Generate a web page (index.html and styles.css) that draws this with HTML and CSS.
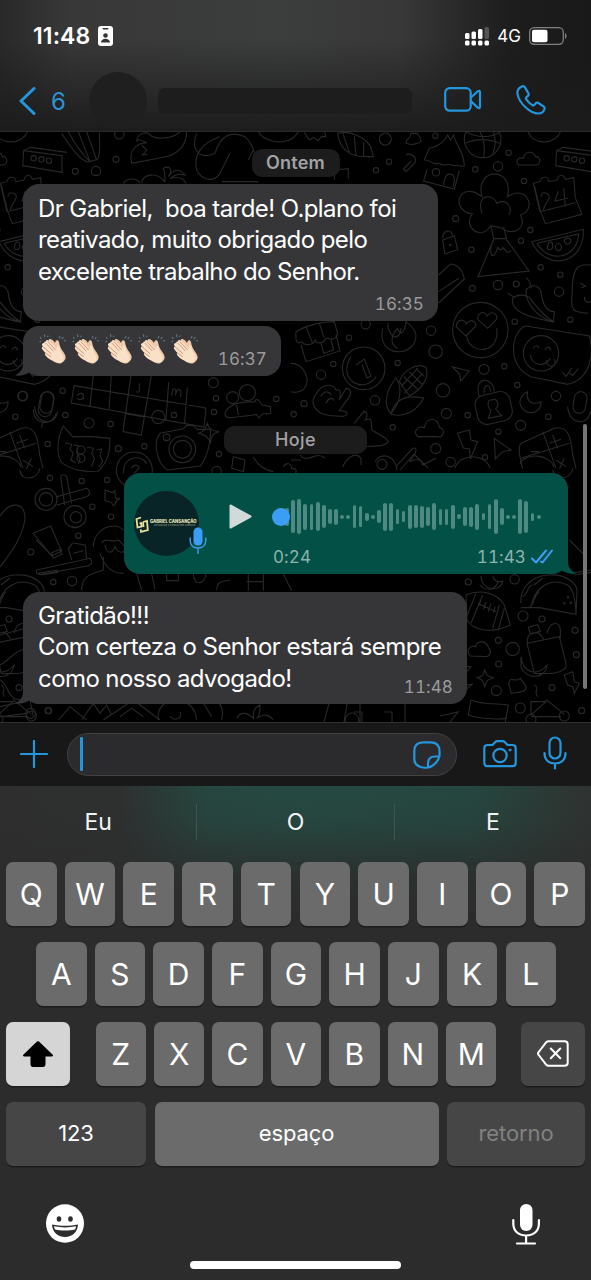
FILE: index.html
```html
<!DOCTYPE html>
<html lang="pt-BR">
<head>
<meta charset="utf-8">
<meta name="viewport" content="width=device-width">
<title>Conversa</title>
<link rel="stylesheet" href="styles.css">
</head>
<body>
<svg class="defs" width="0" height="0" aria-hidden="true">
  <symbol id="clap" viewBox="0 0 28 30">
    <g stroke="#5c6f7c" stroke-width="1.3" stroke-linecap="round" fill="none"><path d="M1.500 3.500l.5.8M5.500 1l.3 1.500M1 7.500l.6 0M20 4l1-1.500M24 3.500l-1 1M26.500 6.500l-1 .3M9 2l-.3.500"/></g>
    <path d="M10 5.500C12 4 14.500 7 16 9c.500-2 1.500-3.500 3-2.500 1.500 1 1 4 2.500 7 2 4 6 7.500 5 11-.5 2-3 4.500-5 5-3 .500-6-2-8-5C8 19 6 15 7 12z" fill="#efc9aa"/>
    <path d="M3.500 9.500c-1 1-.5 2 .5 3.200-1.500.2-1.500 1.600-.5 2.800 1 1.500 2.200 2.600 3 3.500-1 .500-.8 1.500 0 2.500 2 3 6 4.500 9 6.500 2.500 1.500 7 1 9-2 1.500-2.500-1.500-6-3-9-1-2.500-.5-4.500-2-5.500-1.500-.5-2 1.500-1.500 3.500-3-3-6-7-9-8.800-1.200-.7-2.300.2-2 1.400-1-.6-2.500.4-1.500 1.700-1-.6-1.600-.3-2 .200z" fill="#fbe0c8"/>
    <path d="M7 9.300l7 7.400M9 7.800l7.500 8M4 12.700l8 7M6.500 19l5 3.500" stroke="#c99270" stroke-width=".9" fill="none" stroke-linecap="round"/>
  </symbol>
  <symbol id="mic" viewBox="0 0 24 34">
    <rect x="6.500" y="1.500" width="11" height="21" rx="5.500"/><path d="M1.500 17c0 6.500 4 10.500 10.500 10.500S22.500 23.500 22.500 17M12 27.500v5"/>
  </symbol>
</svg>

<header class="header">
  <div class="status">
    <div class="clock"><span>11:48</span>
      <svg width="15" height="20" viewBox="0 0 15 20"><rect width="15" height="20" rx="3" fill="#fff"/><rect x="4.500" y="2" width="6" height="1.500" rx=".7" fill="#353535"/><circle cx="7.500" cy="9.500" r="2.300" fill="#353535"/><path d="M3 16.500c.3-5 8.700-5 9 0z" fill="#353535"/></svg>
    </div>
    <div class="signal">
      <svg width="24" height="19" viewBox="0 0 24 19" fill="#fff"><rect x="0" y="6" width="4.500" height="6" rx="1.500"/><rect x="6.500" y="4.500" width="4.500" height="7.500" rx="1.500"/><rect x="13" y="2" width="4.500" height="10" rx="1.500"/><rect x="19.500" y="0" width="4.500" height="12" rx="1.500" fill="#555"/><rect y="13.500" width="4.500" height="5" rx="1.500"/><rect x="6.500" y="13.500" width="4.500" height="5" rx="1.500"/><rect x="13" y="13.500" width="4.500" height="5" rx="1.500"/><rect x="19.500" y="13.500" width="4.500" height="5" rx="1.500"/></svg>
      <span>4G</span>
      <svg width="38" height="18" viewBox="0 0 38 18"><rect x=".7" y=".7" width="33.600" height="16.600" rx="4.500" fill="none" stroke="#818181" stroke-width="1.300"/><rect x="3" y="2.800" width="15.500" height="12.400" rx="2" fill="#fff"/><path d="M36 6c2 1 2 5 0 6z" fill="#818181"/></svg>
    </div>
  </div>
  <div class="nav">
    <svg width="17" height="28" viewBox="0 0 17 28" class="stroke back"><path d="M15 1.500L2 14l13 12.500"/></svg>
    <span class="unread">6</span>
    <span class="avatar"></span>
    <span class="contact"></span>
    <svg width="38" height="25" viewBox="0 0 38 25" class="stroke video"><rect x="1.200" y="1.200" width="25.500" height="22.500" rx="4.500"/><path d="M27 10.500l6.500-6c1.500-1.200 2.500-.8 2.500.700v14.500c0 1.500-1 2-2.500.7l-6.500-6"/></svg>
    <svg width="30" height="30" viewBox="0 0 30 30" class="stroke phone"><path d="M6 1.400C3.500 2.500 1 5 1.400 8.500c.6 4.500 4 10 8.400 14 4 3.800 9.200 6 12.700 6 3 0 5.200-2 6-4.500.4-1.200 0-2-1-2.700l-5-3.300c-1-.7-2-.5-2.700.3l-1.300 1.500c-.7.800-1.400.8-2.200.3-2.500-1.600-4.600-3.700-6-5.800-.6-.9-.5-1.600.2-2.200l1.500-1.300c.8-.7.900-1.700.3-2.700L9 2.400c-.7-1-1.700-1.500-3-1z"/></svg>
  </div>
</header>

<main class="chat">
  <svg class="wallpaper" viewBox="0 132 591 590" width="591" height="590" aria-hidden="true">
    <g id="doodles">
      <g transform="translate(291 130) scale(.33333)">
        <path d="M140 10c5 45 35 72 85 70h22l-8-30C220 20 175 0 140 10zM155 8l20 60M190 18l5 60M218 35v45M40 8l15 22 12-8 14 10 10-12h14l-6-20M345 40c0-20 15-10 15-30h20c0 12 12 8 10 25-15 10-35 10-45 5M345 75c12-8 40 10 25 25l-25 25-8-8 24-24M130 150v-30l42-4v30"/>
        <path d="M400 90l15-35c25-5 45-20 55-40l8 15 10-15c5 30 30 45 32 92-12 6-18-5-27 0-10 3-18-8-28-3s-18-8-28-3-16-12-37-11M408 118l-10 35 92 24 15-54M458 165c2-25 10-35 22-32s12 15 6 38"/>
        <circle cx="435" cy="127" r="11"/><circle cx="575" cy="28" r="55"/><path d="M525 5c30 20 80 20 102 0M523 40c30-15 70-15 104 0M548-20c30 30 35 70 30 102M595-20c15 20 25 60 10 92M710 0c10 50 90 45 100 0"/>
        <path d="M683 105c-12-12 0-25 14-20 4-22 30-25 36-5 18-2 18 25 0 25zM797 62l115 15v50l-118-20zM797 62l20-10 110 15"/><circle cx="827" cy="85" r="8"/><circle cx="850" cy="88" r="8"/><circle cx="873" cy="92" r="8"/>
        <path d="M573 200c-25-90 100-90 76 0 60-40 90 40 40 55 20 50-35 60-55 40l-35-8c-30 50-85 0-55-35-70-10-40-105 29-52zM573 250c-20-60 35-60 45-30 30-20 50 20 35 35M600 288l8 38h38l-8-35M608 328l-47 112 153-17-68-95M605 332c-15 50 5 60 15 20 10 15 20 0 15 0 15 15 15 20 25 10"/>
        <path d="M727 160l20-5c5-20 25-15 27 0l24-5c5-20 22-15 25-2l25-5 5 60 20 50-110 28-15-40-17-70zM727 160l20 85 106-27M750 200c0-20 25-10 25 0s-20 30-17 42l25-5M802 183l-10 30 38-8M818 175l5 55M722 335l155-37c5 105-110 130-155 37zM738 340l125-28c-5 75-90 90-125 28M770 350c0-15 15-20 15-5 5 15-20 20-15 5M795 345c10-15 25 10 10 17-10 0-15-10-10-17M820 330c10-10 20-5 20 5-10 15-20 5-20-5"/>
        <path d="M665 505c-8 40 45 55 125 72-35-20-55-50-75-75-20-10-35-10-50 3zM705 480c-2 45 40 85 85 97M705 480c20-20 35-15 45 5 5 45 20 60 40 60l-3 32M720 475c0-15-5-25-15-32M650 490l20 12"/>
        <circle cx="568" cy="600" r="83"/><path d="M495 590c5-30 30-20 30-8 15-20 35-5 28 8l-28 28zM560 568c0-25 22-25 28-10 15-20 35-5 27 12l-25 25zM527 620c10 55 100 55 90-25M455 325c0-25 25-30 30-8M455 330l35-13 10 42-38 13zM443 435l35-33c20 0 35 15 42 45l-77 72M443 485l60-40"/><circle cx="478" cy="345" r="2"/>
        <path d="M15 605c35-20 80-30 115-30l10 35c-10 30-30 10-35 15-10 20-30 15-32 5-10 20-35 15-40 5-15 10-20 0-18-30M30 645l15 50 102-32-12-50M90 640l8 30 30-10-8-30M45 590l20 50M85 580l15 45M275 595c-20 90 100 90 100 20-5-25-20-30-30-40-5 40-20 40-25 20-20 20-25 50 0 60M290 580c0 40 35 60 40 15"/>
        <circle cx="218" cy="715" r="64"/><path d="M180 680c-45 70 40 115 75 60M195 705l25-18 20 52-12 5-15-40"/><path d="M325 755c10-30 50-60 80-43 12 30-15 70-50 85zM338 740l45 40M355 725l40 40M375 715l25 25M340 790l55-60M330 770l50-55M300 852c-25-30-15-70 15-108 20 30 15 70-15 108 10-40 40-60 98-48-20 40-60 60-98 48"/>
        <path d="M90 850c-30-20-30-40-10-65 20-30 50-20 55-5 15-5 15 10 10 30l20-35c15 0 15 10 12 22l-32 45c30 0 30 15 10 17-20 0-45 0-65-9zM90 800c5-15 25-20 30-5M105 820c5-15 20-20 25-8M0 700c40 0 60 50 40 75-10 10-20 15-40 10M190 880l28-35c15 0 10 15 5 25 25-10 15 5 20 30 30 20 50 25 48 38-15 15-60 10-78 12-15-20-15-40-23-50M155 1010c20-40 45-40 55-25v20M315 1010l50-55c15-5 10 10 5 20l-15 20c30-15 40 0 40 10l40-20"/>
        <path d="M484 710l50 13-25 30-3-20zM380 920c-15-15 0-35 20-27 5-35 45-30 45 0 25 5 5 35-3 27zM500 910l35-10 5 30 20 5-22 52-3-30-18-3zM610 925l50 35-25 5-22 22z"/>
        <rect x="555" y="790" width="106" height="88" rx="28" transform="rotate(-13 608 834)"/><path d="M565 800c-20-60 40-65 45-15M580 790c-5-30 20-30 18-5M605 810c-20-5-15 25-5 30l-8 25 40-8-18-20c15-15 0-35-9-27zM710 785c-20 10-30 30-18 48 25 30 60 10 58-18-35 15-45-10-40-30z"/>
        <path d="M705 588l190 30c15 50 5 130-65 145l-110-23c-75-30-60-140-15-152z"/><circle cx="750" cy="670" r="53"/><path d="M727 655c5-12 15-10 17 0M762 660c5-12 15-10 17 2M718 675c5 30 40 40 60 10M765 690c5 30 35 20 25-2M815 727l10 12 18-25M835 730l10 6 17-20M900 405c-40-5-50 10-55 50l-3 60c0 35 20 30 50 35M868 460l15 8-12 6M880 500c0 20 20 20 20 12"/>
        <rect x="848" y="785" width="38" height="65" rx="19" transform="rotate(10 867 817)"/><path d="M830 830c5 60 65 55 68 15M690 940l100-45c40-10 50 25 55 80l10 40M690 940c-10 10-5 40 5 75M720 965h25M755 905l40 110M690 985l145-45M775 940l35-12M785 915l15 40M795 990l30 20M820 985l-15 32M0 990l30 0"/>
        <g class="dots"><circle cx="283" cy="27" r="18"/><circle cx="433" cy="17" r="8"/><circle cx="294" cy="95" r="8"/><circle cx="255" cy="121" r="8"/><circle cx="553" cy="118" r="8"/><circle cx="621" cy="109" r="14"/><circle cx="653" cy="68" r="8"/><circle cx="699" cy="153" r="8"/><circle cx="494" cy="266" r="9"/><circle cx="541" cy="359" r="8"/><circle cx="690" cy="332" r="8"/><circle cx="718" cy="300" r="8"/><circle cx="749" cy="412" r="8"/><circle cx="808" cy="434" r="8"/><circle cx="804" cy="485" r="14"/><circle cx="544" cy="475" r="9"/><circle cx="621" cy="465" r="14"/><circle cx="676" cy="462" r="9"/><circle cx="671" cy="575" r="8"/><circle cx="838" cy="569" r="8"/><circle cx="420" cy="602" r="14"/><circle cx="434" cy="665" r="20"/><circle cx="224" cy="583" r="14"/><circle cx="174" cy="623" r="8"/><circle cx="127" cy="702" r="8"/><circle cx="90" cy="734" r="14"/><circle cx="320" cy="699" r="8"/><circle cx="579" cy="718" r="15"/><circle cx="640" cy="709" r="8"/><circle cx="679" cy="765" r="8"/><circle cx="795" cy="798" r="14"/><circle cx="456" cy="781" r="20"/><circle cx="252" cy="811" r="14"/><circle cx="39" cy="821" r="9"/><circle cx="466" cy="850" r="15"/><circle cx="530" cy="856" r="8"/><circle cx="689" cy="886" r="15"/><circle cx="772" cy="860" r="8"/><circle cx="305" cy="892" r="8"/><circle cx="622" cy="905" r="8"/><circle cx="434" cy="956" r="15"/><circle cx="479" cy="996" r="14"/><circle cx="582" cy="982" r="8"/><circle cx="273" cy="1003" r="15"/></g>
      </g>
      <g transform="translate(0 130) scale(.33333)">
        <path d="M185 10c20 30 50 80 80 86l28-8c10-20 5-60 5-80M205 5c15 30 40 65 65 90M235 5l35 90M260 5l30 85M410 35c0-20 20-30 35-25 15 20 70 20 95-5l20-3c0 40-20 70-70 80l-95 18c-10-40 15-60 45-62-15-5-25-15-30-3M425 45l15 15-12 15 15-3M590 10c-20 50 10 80 55 60 15-50 45-70 90-50 30 30 35 60 25 100M660 20c-60 20-80 60-70 100 15 30 50 40 70 10l30-60M665 155h110M745 90l15-30M370 160c15-20 45-15 50 0M425 160c0-30 50-35 70-3M495 155c0-20 0-30-5-40 20-10 30 5 15 25 20-30 40-20 50-5-20-5-30 0-45 10 20-5 40-5 48 15M775 0c0 30 90 60 120 5"/>
        <circle cx="226" cy="124" r="9"/><circle cx="288" cy="123" r="14"/><circle cx="348" cy="88" r="9"/><circle cx="358" cy="13" r="14"/>
      </g>
      <g transform="translate(0 370) scale(.33333)">
        <path d="M222 55l396 67-8 0M222 55l-8 52 398 72 6-57M280 20l-10 97M335 10l-8 117M395 10l-26 183 55 10 32-190M506 45l-8 113M562 60l-8 108M380 140l50 8M232 85c5-10 18-8 18 0v12M232 92c5 8 15 5 18-2M418 48v20c0 8-5 8-10 4M515 85l3-18c5-5 10-3 10 5l-2 12 5-15c5-5 12-3 12 5l-2 15" transform="translate(0 -8)"/>
        <rect x="118" y="65" width="40" height="75" rx="20" transform="rotate(10 138 102)"/><path d="M100 118c0 50 60 50 68 12M128 158l-3 15M190 168l28 32h60l52 5c0 40-5 70-35 98-40 5-85-5-110-25-20-30-10-80 5-110zM195 218l20 5-5 15 10 12-8 20 15 8M220 225l15 2-5 20 10 20-5 15M260 230l20 5-5 15 8 15-8 25M290 240l15-3-5 20 8 15-10 20"/><circle cx="243" cy="240" r="12"/><circle cx="243" cy="265" r="12"/>
        <path d="M480 190l70-14 10-10h20l12 12 40 0c0 50-10 80-30 110l-100 12c-30-20-45-80-22-110z"/><circle cx="547" cy="238" r="40"/><circle cx="547" cy="238" r="27"/><circle cx="500" cy="202" r="10"/><path d="M595 190c20-5 22-15 27-30 5 20 15 22 35 25-20 5-25 15-25 35-8-20-15-25-37-30zM675 130c10-35 70-35 90-35 5-15 15 0 22 10l25 5v20l-25 2-10 12-8-10c-60 5-95 20-94-4M710 105l5 30"/><circle cx="698" cy="83" r="18"/><circle cx="742" cy="68" r="24"/><circle cx="403" cy="300" r="54"/><path d="M370 310c0-50 50-60 70-30M395 295c5-15 25-10 22 0l-15 15M700 260l35 10-5 35-35-10zM850 290c10-15 25-10 25 5 20 0 15 15 5 20M760 260c10 20 30 40 60 45M315 360c20 5 25 15 30 0 0 20 0 30 15 25-20 10-10 20-20 22-10-20-20-10-25-15z"/>
        <circle cx="138" cy="388" r="33"/><circle cx="138" cy="388" r="20"/><circle cx="225" cy="440" r="33"/><circle cx="228" cy="442" r="17"/><path d="M170 380l90-25c10 5 12 20 0 25l-90 25M182 320c5-10 15-5 18 0l15 80M182 320l12 85M100 490l52-22 33 75-30 15zM155 548l25-10 5 15-25 12zM110 600l160-35c8 10 5 20-5 22l-145 27c-10 0-12-10-10-14M215 570l-10-35c15-10 5-20 20-15l30 5c5 10 0 15 5 40M220 550l30-8M280 530c0-50 60-80 90-50M300 550c10 30 30 60 70 60M305 520c10-20 30 0 50-10l20 20M315 525c5 30 25 25 30 5 8 20 25 20 30 10M310 560v40M245 660c0-50 40-50 65-60M410 610l15 50M455 612l10 45M500 612v20h35v-20M580 610c0 40 35 35 38 0M650 660c0-30 25-25 40-30M745 612v50M790 612v50M740 635h50M850 612l25 50"/>
        <path d="M175 1050l35-40 50 40M245 1050l35-50 20 30 20-25 15 30M310 1050l90-60 80 60M360 1040l35-25 35 25M475 1050c-10-80 110-80 115 0M510 1040c15 15 40 5 30-15M610 1000l25 40M650 990c20 20 20 40 15 60M710 1045c10-20 30-20 50 0 0-20 0-30 20-40 0 20 0 30-10 40 20-15 40-10 50 5M0 1010l90-20 10 50M5 1040l75-10"/>
        <g class="dots"><circle cx="67" cy="78" r="14"/><circle cx="188" cy="62" r="8"/><circle cx="196" cy="135" r="8"/><circle cx="267" cy="159" r="15"/><circle cx="332" cy="162" r="8"/><circle cx="475" cy="141" r="20"/><circle cx="522" cy="135" r="8"/><circle cx="640" cy="38" r="15"/><circle cx="648" cy="85" r="8"/><circle cx="642" cy="126" r="8"/><circle cx="829" cy="87" r="8"/><circle cx="881" cy="133" r="8"/><circle cx="143" cy="222" r="8"/><circle cx="355" cy="236" r="9"/><circle cx="433" cy="229" r="8"/><circle cx="657" cy="252" r="8"/><circle cx="650" cy="303" r="14"/><circle cx="150" cy="324" r="8"/><circle cx="245" cy="333" r="8"/><circle cx="321" cy="330" r="8"/><circle cx="277" cy="410" r="8"/><circle cx="333" cy="440" r="8"/><circle cx="235" cy="497" r="8"/><circle cx="92" cy="546" r="9"/><circle cx="160" cy="636" r="8"/><circle cx="216" cy="633" r="14"/><circle cx="144" cy="1022" r="9"/><circle cx="92" cy="1030" r="15"/></g>
      </g>
      <g transform="translate(441 540) scale(.33333)">
        <path d="M75 165c45-20 95-5 115 30l18 60c-50 25-110 20-130-15zM105 160l-28 70M125 165l-35 85M175 195l-20 70M190 205l-18 65M110 190l55 25M120 180l-8 20M135 186l-8 22M150 190l-8 25M163 200l-6 18M120 108c0 45 60 50 65 15-15 5-25 0-30-15M240 190c-5-40 25-80 80-85 60-5 90 30 88 50l-3 68-110-20-55 0M270 200c10-60 60-90 110-65 20 15 25 60 25 88M245 170c20-10 10-30 30-35M265 200c20-10 10-30 30-45"/>
        <circle cx="381" cy="172" r="2"/><circle cx="370" cy="190" r="2"/><circle cx="390" cy="188" r="2"/>
        <path d="M88 348c-15-15 0-35 15-28 5-20 35-20 40 5 10 5 5 25-10 25zM258 310l97-20 20 80c5 20-20 35-95 30zM260 310c-5-30 15-35 35-30l15 20M262 262l28-8 8 20-30 8zM318 280c10-40 40-35 40-10v25M240 350c5 50 50 60 78 25-5 45-65 45-78 5zM108 413c20-5 20-12 23-25 5 20 10 22 27 25-20 5-22 10-27 27-5-20-8-22-23-27zM203 430c5-25 20 0 35-15l18 25c0 15-15 15-45 20zM280 435c20 10-5 20 10 35M370 405l25-10 5 30 15 5-15 30-5-20-15-5zM90 480c30 15 90 10 112 15l-10 55M90 480l-8 45c30 10 80 15 115 10M270 485h45l-45 40zM315 478l55 45M270 530h90M385 0l50 50M390 100l60-10M400 105l50-8M60 380h30l-20 25M50 440l45-8-25 20"/>
        <g class="dots"><circle cx="82" cy="126" r="9"/><circle cx="221" cy="118" r="14"/><circle cx="246" cy="228" r="15"/><circle cx="303" cy="237" r="9"/><circle cx="402" cy="271" r="9"/><circle cx="172" cy="301" r="9"/><circle cx="215" cy="327" r="20"/><circle cx="173" cy="372" r="9"/><circle cx="406" cy="344" r="9"/><circle cx="166" cy="452" r="15"/><circle cx="333" cy="443" r="9"/><circle cx="238" cy="504" r="15"/><circle cx="422" cy="512" r="9"/><circle cx="270" cy="538" r="15"/><circle cx="370" cy="528" r="15"/></g>
      </g>
      <path d="M345 722c0-12 14-12 14 0M330 700l-6 22M347 704l-3 18M405 704v18M360 704v18M354 712h8v10M384 712h8v10M440 716l18-4-8 10M300 455c8 10 15-5 25 3M375 462c5-10 20-8 22 8M400 470l14-16 14 14M455 468c5-15 30-15 35 0M480 585c5 6 15 6 18-3M520 464c5-12 30-10 34 3M534 585l9-7M553 470c0 12 18 10 20-2"/>
    </g>
    <use href="#doodles" x="-533"/>
    <path d="M0 516c10-15 25-15 25 3-3 20-15 35-25 48M0 635l23-6M0 665c10-5 15-15 23-15M0 680c10 5 5 20 23 20"/>
  </svg>

  <span class="day day-first">Ontem</span>

  <article class="bubble in first">
    <p>Dr Gabriel,&nbsp; boa tarde! O.plano foi<br>reativado, muito obrigado pelo<br>excelente trabalho do Senhor.</p>
    <time>16:35</time>
  </article>

  <article class="bubble in claps">
    <svg class="tail" width="22" height="16" viewBox="0 0 22 16"><path d="M8 0v4c0 5-3 9-8 11.500 5 1 11-1 15-3.500l7 4V0z"/></svg>
    <span class="emoji" role="img" aria-label="Aplausos"><svg><use href="#clap"/></svg><svg><use href="#clap"/></svg><svg><use href="#clap"/></svg><svg><use href="#clap"/></svg><svg><use href="#clap"/></svg></span>
    <time>16:37</time>
  </article>

  <span class="day day-today">Hoje</span>

  <article class="bubble out">
    <svg class="tail" width="22" height="16" viewBox="0 0 22 16"><path d="M14 0v4c0 5 3 9 8 11.500-5 1-11-1-15-3.500l-7 4V0z"/></svg>
    <div class="sender">
      <svg class="brand" width="14" height="17" viewBox="0 0 14 17"><path d="M6 1.500L1.500 3l1 8.500 4-1L6 7 4.500 7.500M8 6l4-1 .8 9L6 15.800l-.3-2.500M8 6l.5 5"/></svg>
      <div class="brand-text"><b>GABRIEL CANSANÇÃO</b><small>ADVOGADO E CONSULTOR JURÍDICO</small></div>
      <svg class="voice" width="18" height="27" viewBox="0 0 18 27"><rect x="4.500" y=".5" width="9" height="18" rx="4.500" fill="#3c9df5"/><path d="M1.200 11v2.500c0 4.500 3 7.500 7.800 7.500s7.800-3 7.800-7.500V11M9 21v5.500" fill="none" stroke="#3c9df5" stroke-width="1.400" stroke-linecap="round"/></svg>
    </div>
    <svg class="play" width="23" height="25" viewBox="0 0 23 25"><path d="M1.500 1.500v22L21.500 12.500z"/></svg>
    <div class="player">
      <div class="wave">
        <i style="height:18px"></i><i style="height:33px"></i><i style="height:35px"></i><i style="height:26px"></i><i style="height:26px"></i><i style="height:29px"></i><i style="height:23px"></i><i style="height:15px"></i><i style="height:16px"></i><i style="height:4px"></i><i style="height:4px"></i><i style="height:23px"></i><i style="height:21px"></i><i style="height:8px"></i><i style="height:4px"></i><i style="height:13px"></i><i style="height:28px"></i><i style="height:28px"></i><i style="height:15px"></i><i style="height:11px"></i><i style="height:24px"></i><i style="height:23px"></i><i style="height:22px"></i><i style="height:19px"></i><i style="height:27px"></i><i style="height:16px"></i><i style="height:16px"></i><i style="height:24px"></i><i style="height:5px"></i><i style="height:19px"></i><i style="height:20px"></i><i style="height:26px"></i><i style="height:7px"></i><i style="height:25px"></i><i style="height:35px"></i><i style="height:17px"></i><i style="height:4px"></i><i style="height:4px"></i><i style="height:35px"></i><i style="height:32px"></i><i style="height:8px"></i><i style="height:4px"></i>
        <span class="knob"></span>
      </div>
      <div class="meta"><span>0:24</span><span class="sent">11:43 <svg width="22" height="15" viewBox="0 0 22 15"><path d="M1 9.500l4 4L15 1.500M10 12.500l1.500 1L21 1.500"/></svg></span></div>
    </div>
  </article>

  <article class="bubble in thanks">
    <svg class="tail" width="22" height="16" viewBox="0 0 22 16"><path d="M8 0v4c0 5-3 9-8 11.500 5 1 11-1 15-3.500l7 4V0z"/></svg>
    <p>Gratidão!!!<br>Com certeza o Senhor estará sempre<br>como nosso advogado!</p>
    <time>11:48</time>
  </article>
  <span class="scrollbar"></span>
</main>

<section class="composer">
  <svg width="28" height="28" viewBox="0 0 28 28" class="stroke plus"><path d="M14 1v26M1 14h26"/></svg>
  <div class="field"><span class="caret"></span>
    <svg width="28" height="28" viewBox="0 0 28 28" class="stroke"><path d="M15 26.500c-2 .4-5 .2-7.500-.5C3.500 24.700 1.300 22 1.300 18V10c0-5.500 3-8.700 8.700-8.700h7.500c5.500 0 9 3 9 8.700v5c-.5 4.500-6.500 11-11.500 11.500zM15 26.500v-4c0-4.500 2.500-7 7-7h4.500"/></svg>
  </div>
  <svg width="34" height="28" viewBox="0 0 34 28" class="stroke camera"><path d="M4.500 5h5l3-3.200c.5-.4 1-.6 1.500-.6h6c.6 0 1 .2 1.500.6l3 3.200h5c2 0 3.200 1 3.200 3v15c0 2-1.200 3.200-3.200 3.200h-25c-2 0-3.200-1.200-3.200-3.200V8c0-2 1.200-3 3.200-3z"/><circle cx="17" cy="15.500" r="6.700"/><circle cx="27" cy="10" r="1" fill="#2a94d6" stroke-width="1"/></svg>
  <svg width="24" height="34" class="stroke talk"><use href="#mic"/></svg>
</section>

<section class="keyboard">
  <div class="suggestions"><span>Eu</span><span>O</span><span>E</span></div>
  <div class="row"><b>Q</b><b>W</b><b>E</b><b>R</b><b>T</b><b>Y</b><b>U</b><b>I</b><b>O</b><b>P</b></div>
  <div class="row middle"><b>A</b><b>S</b><b>D</b><b>F</b><b>G</b><b>H</b><b>J</b><b>K</b><b>L</b></div>
  <div class="row third">
    <span class="key shift"><svg width="30" height="26" viewBox="0 0 30 26"><path d="M14 .6c.6-.6 1.400-.6 2 0l13.500 12.800c1 1 .5 2.200-.8 2.200H22.500V23c0 2-1 3-2.500 3H10c-1.500 0-2.500-1-2.500-3v-7.400H1.300c-1.300 0-1.800-1.200-.8-2.200z"/></svg></span>
    <div class="letters"><b>Z</b><b>X</b><b>C</b><b>V</b><b>B</b><b>N</b><b>M</b></div>
    <span class="key dark"><svg width="32" height="27" viewBox="0 0 32 27" fill="none" stroke="#fff" stroke-width="2" stroke-linecap="round" stroke-linejoin="round"><path d="M11.500 1.200h16c2 0 3.200 1.200 3.200 3v18.600c0 2-1.200 3-3.200 3h-16c-1 0-1.500-.3-2.200-1L1.700 15c-.9-1-.9-2 0-3l7.600-9.800c.7-.7 1.200-1 2.200-1zM13.800 8.500l9.500 9.800M23.300 8.500l-9.500 9.800"/></svg></span>
  </div>
  <div class="row fourth"><span class="key dark">123</span><span class="key">espaço</span><span class="key dark off">retorno</span></div>
  <div class="bottom">
    <svg width="38" height="39" viewBox="0 0 38 39"><ellipse cx="19" cy="19.500" rx="19" ry="19.300" fill="#fff"/><ellipse cx="13" cy="15" rx="2.300" ry="2.800" fill="#2c2c2c"/><ellipse cx="24.500" cy="15" rx="2.300" ry="2.800" fill="#2c2c2c"/><path d="M6 20.500c8 1.800 18 1.800 26 0-.4 7.500-5.500 12.500-13 12.500S6.400 28 6 20.500z" fill="#2c2c2c"/><path d="M8 22.300c7 1.500 15 1.500 22 0-.2 1.500-.5 2.500-1 3.200-6 1.300-14 1.300-20 0-.6-.8-.9-1.800-1-3.200z" fill="#fff"/></svg>
    <svg width="28" height="41" viewBox="0 0 28 41"><rect x="8" y="0" width="12.500" height="27" rx="6.200" fill="#fff"/><path d="M1.300 16v3.500c0 7.500 5 12 12.800 12s12.800-4.500 12.800-12V16M14.100 32v7M5 39.500h18" fill="none" stroke="#fff" stroke-width="2.200" stroke-linecap="round"/></svg>
  </div>
  <span class="home"></span>
</section>
</body>
</html>
```
FILE: styles.css
```css
* { box-sizing: border-box; }
body {
  margin: 0;
  width: 591px;
  height: 1280px;
  overflow: hidden;
  display: flex;
  flex-direction: column;
  background: #000;
  color: #fff;
  font-family: Inter, "Liberation Sans", sans-serif;
}
p { margin: 0; }
svg { display: block; flex: none; }
.defs { position: absolute; }
.stroke { fill: none; stroke: #2496dc; stroke-width: 2.2; stroke-linecap: round; stroke-linejoin: round; }

/* Header */
.header {
  height: 132px;
  flex: none;
  border-bottom: 1px solid #2b2b2b;
  background:
    linear-gradient(to bottom, rgba(27,27,27,0) 30%, rgba(27,27,27,.95) 100%),
    linear-gradient(to right, #292929 0, #383838 70px, #3c3d3d 280px, #383838 400px, #1d1d1d 510px, #191919 591px);
}
.status { height: 72px; display: flex; justify-content: space-between; padding: 0 24px 0 33px; }
.clock, .signal { display: flex; align-items: center; }
.clock { font-size: 23px; font-weight: 600; gap: 8px; letter-spacing: .1px; }
.signal { font-size: 17px; font-weight: 400; gap: 8px; }
.nav { height: 58px; display: flex; align-items: center; padding-left: 19px; }
.back { stroke-width: 3; }
.unread { color: #2b93d4; font-size: 24px; width: 16px; margin: 0 22px 0 15px; }
.avatar { width: 58px; height: 58px; border-radius: 50%; background: #1f1f1f; flex: none; }
.contact { width: 254px; height: 26px; border-radius: 7px; background: #1d1d1d; margin: 0 32px 0 11px; flex: none; }
.phone { margin: -3px 0 0 34px; }
.video { margin-top: -3px; }

/* Conversation */
.chat { height: 590px; flex: none; position: relative; display: flex; flex-direction: column; align-items: flex-start; overflow: hidden; }
.wallpaper { position: absolute; inset: 0; fill: none; stroke: #282828; stroke-width: 1.1; }
.wallpaper g g { stroke-width: 3.3; }
.day {
  position: relative;
  align-self: center;
  height: 28px;
  line-height: 28px;
  border-radius: 10px;
  background: #1c1c1d;
  color: #a2a2a4;
  font-size: 18px;
  font-weight: 600;
  text-align: center;
  flex: none;
}
.day-first { width: 88px; margin-top: 17px; letter-spacing: .2px; }
.day-today { width: 143px; margin-top: 50px; font-weight: 500; letter-spacing: .4px; }
.bubble { position: relative; border-radius: 16px; background: #363638; flex: none; }
.in { margin-left: 23px; padding-left: 15px; }
.bubble p { font-size: 24px; line-height: 31.5px; white-space: nowrap; letter-spacing: -.58px; }
.bubble time { position: absolute; right: 14px; bottom: 6px; color: #9b9b9e; font-size: 17px; line-height: 22px; letter-spacing: .1px; font-variant-numeric: tabular-nums; }
.tail { position: absolute; left: -8px; bottom: 0; fill: #363638; }
.first { width: 415px; height: 137px; margin-top: 7px; padding-top: 8.5px; }
.claps { width: 258px; height: 50px; margin-top: 5px; }
.emoji { display: flex; gap: 5px; padding-top: 8px; padding-left: 1px; }
.emoji svg { width: 28px; height: 30px; }
.thanks { width: 444px; height: 112px; margin-top: 18px; padding-top: 7.500px; }
.out { align-self: flex-end; width: 444px; height: 101px; margin: 19px 23px 0 0; background: #035146; display: flex; padding-left: 10px; }
.out .tail { left: auto; right: -8px; fill: #035146; }
.sender { position: relative; width: 65px; height: 65px; margin-top: 18px; border-radius: 50%; background: #092426; display: flex; align-items: center; flex: none; }
.brand { fill: none; stroke: #eadf9c; stroke-width: 1.8; margin: 2px 1px 0 1px; }
.brand-text { display: flex; flex-direction: column; color: #efe8be; white-space: nowrap; line-height: 4px; }
.brand-text b { font-size: 4.2px; font-weight: 800; }
.brand-text small { font-size: 2.3px; color: #a8a67e; padding-left: 4px; line-height: 3px; }
.voice { position: absolute; left: 55px; top: 36px; }
.play { margin: 31px 20px 0 30px; fill: #d2dad9; stroke: #d2dad9; stroke-width: 2; stroke-linejoin: round; }
.player { width: 281px; padding-top: 25px; }
.wave { position: relative; height: 37px; margin-left: 13px; width: 256px; display: flex; justify-content: space-between; align-items: center; }
.wave i { width: 3.8px; border-radius: 2px; background: #4e8a81; }
.knob { position: absolute; left: -13px; top: 9.500px; width: 18px; height: 18px; border-radius: 50%; background: #3c9df5; }
.meta { display: flex; justify-content: space-between; color: #8eb3ae; font-size: 17px; line-height: 22px; margin: 11px 0 0 1px; letter-spacing: .1px; font-variant-numeric: tabular-nums; }
.sent { display: flex; align-items: center; gap: 5px; }
.sent svg { fill: none; stroke: #3c9df5; stroke-width: 2; stroke-linecap: round; stroke-linejoin: round; margin-top: -2px; }
.scrollbar { position: absolute; right: 4px; top: 292px; width: 4px; height: 265px; border-radius: 2px; background: #757575; }

/* Composer */
.composer { height: 64px; flex: none; display: flex; align-items: center; background: #181818; border-top: 1px solid #303030; padding-left: 20px; }
.field { width: 390px; height: 43px; margin: 0 26px 0 19px; border: 1px solid #424244; border-radius: 22px; background: #2b2b2d; display: flex; align-items: center; justify-content: space-between; padding: 0 15px 0 12px; }
.caret { width: 3px; height: 34px; border-radius: 1px; background: #2496dc; margin-top: -1px; }
.camera { margin-right: 27px; }
.plus, .camera { margin-top: -1px; }
.talk { margin: -3px 0 0 -1px; }

/* Keyboard */
.keyboard {
  flex: 1;
  position: relative;
  padding: 0 6px;
  background:
    linear-gradient(to bottom, rgba(44,44,44,0) 0, rgba(44,44,44,.15) 35px, rgba(44,44,44,.85) 90px, #2c2c2c 125px),
    linear-gradient(to right, #2e2e2e 0, #2e3030 120px, #264740 210px, #254a42 300px, #254740 470px, #2b3a36 545px, #2f3331 591px);
}
.suggestions { height: 75.5px; display: flex; margin: 0 -6px; align-items: center; font-size: 23px; color: #f2f4f4; }
.suggestions span { flex: 1; text-align: center; height: 36px; line-height: 36px; margin-top: -3px; }
.suggestions span + span { border-left: 1px solid #3f544f; }
.row, .letters { display: flex; justify-content: space-between; }
.row { height: 64px; margin-bottom: 16px; }
.middle { padding: 0 29px 0 30px; }
.row b, .key {
  width: 50.5px;
  height: 64px;
  border-radius: 7px;
  background: #6b6b6b;
  box-shadow: 0 1.5px 0 #1c1c1c;
  display: flex;
  align-items: center;
  justify-content: center;
  font-size: 30px;
  font-weight: 400;
  flex: none;
}
.letters { width: 401px; margin-left: 1px; }
.third .key { width: 64px; }
.fourth .key { width: 140px; font-size: 22px; padding-bottom: 2px; letter-spacing: -.1px; }
.fourth .key:nth-child(2) { width: 284px; }
.fourth .key:nth-child(3) { width: 138px; }
.key.shift { background: #d5d5d5; }
.key.dark { background: #464646; }
.key.off { color: #818181; }
.bottom { display: flex; justify-content: space-between; padding: 22px 45px 0 40px; }
.home { position: absolute; left: 190px; top: 475px; width: 211px; height: 8px; border-radius: 4px; background: #fff; }
```
